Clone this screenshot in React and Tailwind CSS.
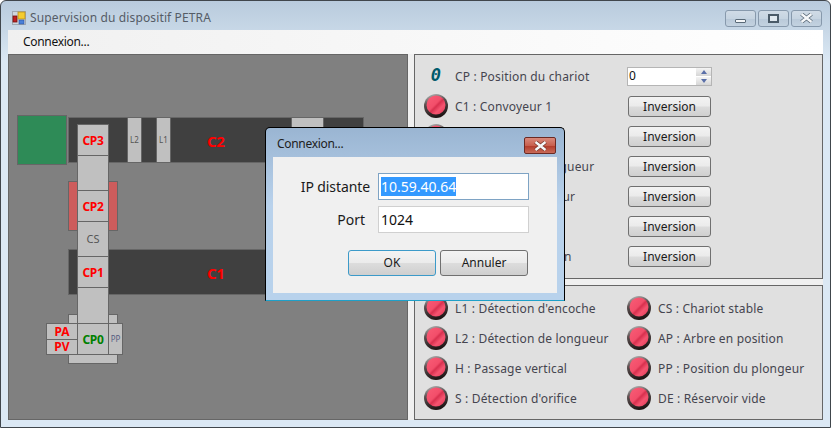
const UI_FONT = "font-['Noto_Sans','Liberation_Sans',sans-serif]";
const BTN_BG = "bg-[linear-gradient(#f3f3f3_0%,#ebebeb_48%,#dcdcdc_52%,#cfcfcf_100%)]";

// Red indicator lamp, off state
function Led() {
  return (
    <svg width="24" height="24" viewBox="0 0 24 24" className="shrink-0">
      <defs>
        <linearGradient id="ledRing" x1="0.3" y1="0" x2="0.6" y2="1">
          <stop offset="0" stopColor="#b0b0b0" />
          <stop offset="0.35" stopColor="#5a5050" />
          <stop offset="1" stopColor="#1a1010" />
        </linearGradient>
        <linearGradient id="ledFace" x1="0.1" y1="0.1" x2="0.9" y2="0.9">
          <stop offset="0" stopColor="#f85a74" />
          <stop offset="0.45" stopColor="#f24e6a" />
          <stop offset="0.55" stopColor="#d8304e" />
          <stop offset="0.75" stopColor="#f65470" />
          <stop offset="1" stopColor="#e8405e" />
        </linearGradient>
      </defs>
      <circle cx="12" cy="12" r="12" fill="url(#ledRing)" />
      <circle cx="12" cy="11" r="9.5" fill="url(#ledFace)" />
    </svg>
  );
}

function AppIcon() {
  return (
    <svg width="14" height="14" viewBox="0 0 14 14" className="shrink-0">
      <rect x="0.5" y="0.5" width="13" height="13" fill="#cfd6dd" stroke="#a0a8b0" />
      <rect x="1" y="5" width="4" height="6" fill="#c02020" stroke="#701010" strokeWidth="0.8" />
      <rect x="6" y="1" width="7" height="7" fill="#f4cc30" stroke="#b89020" strokeWidth="0.8" />
      <rect x="7" y="9" width="5" height="4" fill="#4a80d8" stroke="#2a50a0" strokeWidth="0.6" />
    </svg>
  );
}

function WinButton({ children }) {
  return (
    <div className="w-[31px] h-[17px] flex items-center justify-center rounded-[3px] border border-[#8799ac] bg-[linear-gradient(#d0dbe6_0%,#c6d4e1_50%,#b9c9d9_52%,#c3d2e0_100%)]">
      {children}
    </div>
  );
}

function CloseGlyph({ color = "#f5f7f9", edge = "#5a6a78" }) {
  return (
    <svg width="15" height="10" viewBox="0 0 15 10">
      <path d="M2.5 1 L12.5 9 M12.5 1 L2.5 9" stroke={edge} strokeWidth="4" />
      <path d="M2.5 1 L12.5 9 M12.5 1 L2.5 9" stroke={color} strokeWidth="2.4" />
    </svg>
  );
}

function InvButton() {
  return (
    <button className={`w-[83px] h-[21px] mt-[1px] rounded-[3px] border border-[#707070] text-[12px] leading-none tracking-normal text-[#1a1a1a] ${BTN_BG}`}>
      Inversion
    </button>
  );
}

function Cell({ className = "", children }) {
  return (
    <div className={`flex items-center justify-center bg-[#c0c0c0] border border-[#666666] ${className}`}>
      {children}
    </div>
  );
}

function Schema() {
  return (
    <div className="relative flex-1 bg-[#808080] border border-[#666666] font-['Noto_Sans',sans-serif]">
      {/* Reservoir and conveyors */}
      <div className="absolute left-[8px] top-[60px] w-[50px] h-[50px] bg-[#2e8b57] border border-[#666666]" />
      <div className="absolute left-[59px] top-[62px] w-[296px] h-[46px] bg-[#404040] border border-[#666666]" />
      <Cell className="absolute left-[118px] top-[62px] w-[15px] h-[46px] text-[8px] text-[#555555]">L2</Cell>
      <Cell className="absolute left-[147px] top-[62px] w-[15px] h-[46px] text-[8px] text-[#555555]">L1</Cell>
      <Cell className="absolute left-[282px] top-[62px] w-[33px] h-[46px]" />
      <span className="absolute left-[198px] top-[76px] text-[15px] leading-[20px] font-bold tracking-tight text-[#ff0000]">C2</span>

      <div className="absolute left-[59px] top-[126px] w-[50px] h-[50px] bg-[#cd5c5c] border border-[#666666]" />
      <div className="absolute left-[59px] top-[194px] w-[296px] h-[46px] bg-[#404040] border border-[#666666]" />
      <span className="absolute left-[198px] top-[208px] text-[15px] leading-[20px] font-bold tracking-tight text-[#ff0000]">C1</span>

      <div className="absolute left-[59px] top-[259px] w-[50px] h-[50px] bg-[#c0c0c0] border border-[#666666]" />

      {/* Chariot column */}
      <div className="absolute left-[68px] top-[69px] w-[32px] flex flex-col text-[12px] font-bold tracking-[-0.3px] text-[#ff0000]">
        <Cell className="h-[32px] pt-[2px]">CP3</Cell>
        <Cell className="h-[36px] -mt-px" />
        <Cell className="h-[32px] -mt-px pt-[2px]">CP2</Cell>
        <Cell className="h-[36px] -mt-px font-normal text-[11px] tracking-normal text-[#555555]">CS</Cell>
        <Cell className="h-[32px] -mt-px pt-[2px]">CP1</Cell>
        <Cell className="h-[37px] -mt-px" />
        <Cell className="h-[32px] -mt-px pt-[2px] text-[#008000]">CP0</Cell>
      </div>
      <Cell className="absolute left-[37px] top-[268px] w-[32px] h-[17px] text-[12px] font-bold text-[#ff0000]">PA</Cell>
      <Cell className="absolute left-[37px] top-[284px] w-[32px] h-[16px] text-[12px] font-bold text-[#ff0000]">PV</Cell>
      <Cell className="absolute left-[99px] top-[268px] w-[15px] h-[32px] text-[8px] text-[#555c80]">PP</Cell>
    </div>
  );
}

const topRows = [
  "C1 : Convoyeur 1",
  "C2 : Convoyeur 2",
  "PO : Détection longueur",
  "P : Prise de plongeur",
  "D : Distribution",
  "TP : Tige de poinçon",
];

const bottomRows = [
  ["L1 : Détection d'encoche", "CS : Chariot stable"],
  ["L2 : Détection de longueur", "AP : Arbre en position"],
  ["H : Passage vertical", "PP : Position du plongeur"],
  ["S : Détection d'orifice", "DE : Réservoir vide"],
];

function Commands() {
  return (
    <div className="h-[225px] bg-[#e0e0e0] border border-[#666666] pt-[6px] pl-[9px] text-[12px] tracking-[0.17px] text-[#45454f]">
      <div className="h-[30px] flex items-center">
        <span className="w-[24px] text-center text-[17px] font-bold italic text-[#005a6a] font-['DejaVu_Sans_Mono',monospace]">0</span>
        <span className="ml-[7px] mt-[1px] w-[172px]">CP : Position du chariot</span>
        <div className="w-[85px] h-[19px] flex items-stretch justify-between bg-white border border-[#b5b5b5] pl-[1px] text-[#111111]">
          <span className="leading-[15px]">0</span>
          <div className="w-[15px] flex flex-col gap-px">
            <div className="flex-1 flex items-center justify-center bg-[linear-gradient(#f4f4f4,#d6d6d6)]">
              <div className="w-0 h-0 border-x-[3px] border-x-transparent border-b-[4px] border-b-[#5a6fa8]" />
            </div>
            <div className="flex-1 flex items-center justify-center bg-[linear-gradient(#f4f4f4,#d6d6d6)]">
              <div className="w-0 h-0 border-x-[3px] border-x-transparent border-t-[4px] border-t-[#5a6fa8]" />
            </div>
          </div>
        </div>
      </div>
      {topRows.map((label) => (
        <div key={label} className="h-[30px] flex items-center">
          <Led />
          <span className="ml-[7px] mt-[1px] w-[173px] whitespace-nowrap">{label}</span>
          <InvButton />
        </div>
      ))}
    </div>
  );
}

function Sensors() {
  return (
    <div className="h-[135px] bg-[#e0e0e0] border border-[#666666] pt-[7px] pl-[9px] text-[12px] tracking-[0.17px] text-[#45454f]">
      {bottomRows.map(([a, b]) => (
        <div key={a} className="h-[30px] flex items-center">
          <div className="w-[203px] flex items-center">
            <Led />
            <span className="ml-[7px] mt-[1px] whitespace-nowrap">{a}</span>
          </div>
          <Led />
          <span className="ml-[7px] mt-[1px] whitespace-nowrap">{b}</span>
        </div>
      ))}
    </div>
  );
}

function ConnectDialog() {
  return (
    <div className="absolute left-[264px] top-[126px] w-[300px] h-[174px] flex flex-col rounded-t-[5px] border border-black border-b-[#1fa0c8] px-[7px] pb-[7px] bg-[linear-gradient(#9ab5d2_0%,#b9d2ec_45%,#b8d2ec_100%)]">
      <div className="h-[29px] flex items-center justify-between">
        <span className="ml-[4px] mt-[3px] text-[12px] tracking-[-0.3px] text-[#202020]">Connexion...</span>
        <div className="mr-[1px] mt-[6px] w-[32px] h-[17px] flex items-center justify-center rounded-[2px] border border-[#6b2a24] bg-[linear-gradient(#d9897c_0%,#c8604f_50%,#b23a2a_52%,#c86a58_100%)]">
          <CloseGlyph edge="#7a3a30" />
        </div>
      </div>
      <div className="flex-1 bg-[#f0f0f0] pl-[28px] pt-[16px] text-[14px]">
        <div className="flex items-center h-[27px]">
          <span className="w-[77px] shrink-0 pr-[8px] flex justify-end whitespace-nowrap tracking-[-0.1px] text-[#1a1a1a]">IP distante</span>
          <div className="w-[151px] h-[27px] flex items-center bg-white border border-[#7ea3c4] pl-[2px]">
            <span className="bg-[#3399ff] text-white leading-[19px]">10.59.40.64</span>
          </div>
        </div>
        <div className="flex items-center h-[27px] mt-[6px]">
          <span className="w-[77px] shrink-0 pr-[13px] text-right text-[#1a1a1a]">Port</span>
          <div className="w-[151px] h-[27px] flex items-center bg-white border border-[#d0d0d0] pl-[2px] text-[#111111]">1024</div>
        </div>
        <div className="flex gap-[4px] mt-[17px] ml-[47px] text-[12px] text-[#1a1a1a]">
          <button className={`w-[88px] h-[26px] rounded-[3px] border border-[#3c9ac9] ${BTN_BG}`}>OK</button>
          <button className={`w-[88px] h-[26px] rounded-[3px] border border-[#707070] ${BTN_BG}`}>Annuler</button>
        </div>
      </div>
    </div>
  );
}

export default function App() {
  return (
    <div className={`relative w-[831px] h-[428px] overflow-hidden flex flex-col rounded-t-[6px] border border-[#40464c] px-[7px] pb-[7px] bg-[linear-gradient(#b9cbdd_0px,#c8d8e7_30px,#dbe8f4_60px)] ${UI_FONT}`}>
      <div className="h-[29px] shrink-0 flex items-center pt-[4px]">
        <div className="ml-[4px] mr-[4px]"><AppIcon /></div>
        <span className="text-[12px] tracking-[0.13px] text-[#555c66]">Supervision du dispositif PETRA</span>
        <div className="ml-auto mr-[1px] mt-[1px] flex gap-[2px]">
          <WinButton>
            <div className="w-[11px] h-[4px] mt-[5px] bg-[#f4f6f8] border border-[#5a6a78] rounded-[1px]" />
          </WinButton>
          <WinButton>
            <div className="w-[11px] h-[9px] border-2 border-[#4a5a68] bg-[#e0e8ef]" />
          </WinButton>
          <WinButton>
            <CloseGlyph />
          </WinButton>
        </div>
      </div>

      <div className="h-[24px] shrink-0 flex items-center pl-[15px] text-[12px] tracking-[-0.3px] text-[#111111] bg-[linear-gradient(90deg,#f0f0f0,#ffffff)]">
        Connexion...
      </div>

      <div className="h-[366px] flex gap-[6px] bg-[#f0f0f0]">
        <Schema />
        <div className="w-[409px] flex flex-col gap-[6px]">
          <Commands />
          <Sensors />
        </div>
      </div>

      <ConnectDialog />
    </div>
  );
}
